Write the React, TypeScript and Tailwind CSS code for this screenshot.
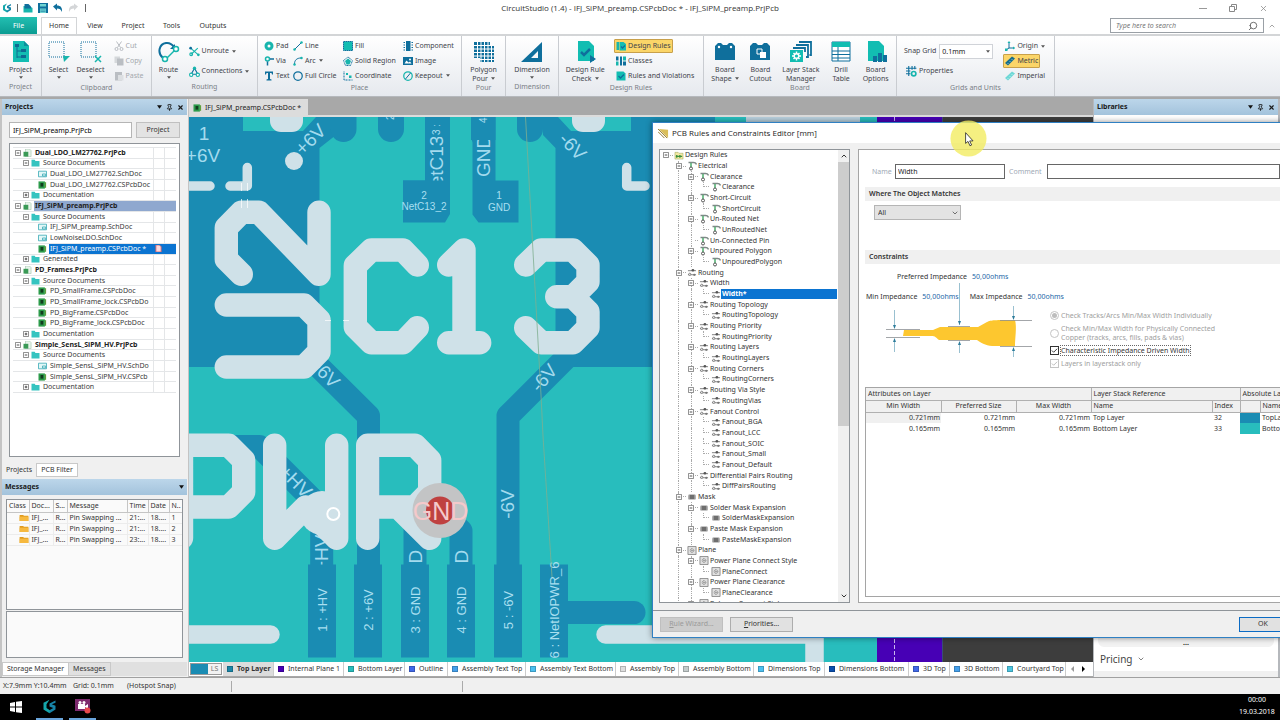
import type { ReactNode } from 'react';
import clsx from 'clsx';
import { ChevronDown, ChevronUp, Pin, Search, X } from 'lucide-react';

const TEAL = '#17b5ad';
const BLUE = '#0f6f9c';

/* ---------- Icons ---------- */

function Svg({ size = 'w-[10px] h-[10px]', box = '0 0 20 20', children }: { size?: string; box?: string; children: ReactNode }) {
  return (
    <svg viewBox={box} className={clsx('shrink-0', size)} fill="none" aria-hidden="true">
      {children}
    </svg>
  );
}

const big = 'w-[22px] h-[22px]';

const icons: Record<string, ReactNode> = {
  project: (
    <Svg size={big} box="0 0 22 22">
      <path d="M3 0h11l5 5v16H3z" fill="#12bdb2" />
      <path d="M14 0v5h5z" fill="#0a8f9c" />
      <path d="M7 5v12M7 10h4M7 16h4" stroke="#0d6c92" />
      <path d="M5 3h4v3H5zM11 8h5v3h-5zM11 14h5v3h-5z" fill="#0d6c92" />
    </Svg>
  ),
  select: (
    <Svg size={big} box="0 0 22 22">
      <rect x="1" y="1" width="15" height="15" stroke={BLUE} strokeDasharray="1 1" />
      <path d="M15 15h7l-6 6z" fill={TEAL} />
    </Svg>
  ),
  deselect: (
    <Svg size={big} box="0 0 22 22">
      <rect x="1" y="1" width="15" height="15" stroke={BLUE} strokeDasharray="1 1" />
      <path d="M15 15l6 6M21 15l-6 6" stroke={TEAL} strokeWidth="1.5" />
    </Svg>
  ),
  route: (
    <Svg size={big} box="0 0 22 22">
      <path d="M5 17C-1 12 1 3 8 2c4-.5 6 1 8 4" stroke={BLUE} strokeWidth="2" />
      <path d="M17 3v5h-5z" fill={BLUE} />
      <path d="M9 17l8-8" stroke={TEAL} strokeWidth="1.5" />
      <circle cx="7" cy="18" r="2.5" fill="#fff" stroke={TEAL} strokeWidth="1.5" />
      <circle cx="18" cy="8" r="2.5" fill="#fff" stroke={TEAL} strokeWidth="1.5" />
    </Svg>
  ),
  polygon: (
    <Svg size={big} box="0 0 22 22">
      <path d="M1 1h16v4h4v16H7v-4H1z" fill={BLUE} />
      <path d="M4.500 1v16M8 1v20M11.500 1v20M15 1v20M18.500 5v16M1 4.500h16M1 8h20M1 11.500h20M1 15h20M7 18.500h14" stroke="#fff" strokeWidth="1" />
    </Svg>
  ),
  dimension: (
    <Svg size={big} box="0 0 22 22">
      <path d="M0 21L21 1v20zM10 17h7v-7z" fill={BLUE} fillRule="evenodd" />
    </Svg>
  ),
  drc: (
    <Svg size={big} box="0 0 22 22">
      <path d="M4 0h11l5 5v15H4z" fill="#12bdb2" />
      <path d="M7 11l3 3 6-6" stroke={BLUE} strokeWidth="2.500" />
      <path d="M16 14l6 4-6 4z" fill={BLUE} />
    </Svg>
  ),
  shape: (
    <Svg size={big} box="0 0 22 22">
      <path d="M1 5l3-3h3l2 2h4l2-2h3l3 3v14H1z" fill={BLUE} />
      <circle cx="5" cy="6" r="1.200" fill="#fff" />
      <circle cx="17" cy="6" r="1.200" fill="#fff" />
    </Svg>
  ),
  cutout: (
    <Svg size={big} box="0 0 22 22">
      <path d="M1 5l3-3h3l2 2h4l2-2h3l3 3v14H1z" fill={BLUE} />
      <path d="M8 8h5v5H8z" stroke="#fff" />
      <path d="M11 11h6v6h-6z" fill="#fff" />
    </Svg>
  ),
  stack: (
    <Svg size={big} box="0 0 22 22">
      <path d="M9 1h12v13h-1.500M6 4h12v12h-2M3 7h12v4" stroke={BLUE} strokeWidth="1.800" />
      <path d="M0 9h13v12H0z" fill="#12bdb2" />
      <path d="M6.500 10.500v9M2 15h9M3.500 12l6 6M9.500 12l-6 6" stroke="#fff" strokeWidth="1.500" />
      <circle cx="6.500" cy="15" r="3" fill="#fff" />
      <circle cx="6.500" cy="15" r="1.600" fill="#12bdb2" />
    </Svg>
  ),
  drill: (
    <Svg size={big} box="0 0 22 22">
      <path d="M2 1h18v19H2z" fill="#fff" stroke={BLUE} />
      <path d="M2 1h18v5H2z" fill="#12bdb2" />
      <path d="M2 10h18M2 13.500h18M2 17h18M8 6v14" stroke={BLUE} />
    </Svg>
  ),
  options: (
    <Svg size={big} box="0 0 22 22">
      <path d="M3 0h11l5 5v15H3z" fill="#12bdb2" />
      <path d="M8 15h4v6H8zM13 12h4v9h-4zM18 14h4v7h-4z" fill={BLUE} />
    </Svg>
  ),
  cut: (
    <Svg>
      <path d="M5 1l8 12M15 1L7 13" stroke="#b9bdc2" strokeWidth="2" />
      <circle cx="5" cy="16" r="3" stroke="#b9bdc2" strokeWidth="2" />
      <circle cx="15" cy="16" r="3" stroke="#b9bdc2" strokeWidth="2" />
    </Svg>
  ),
  copy: (
    <Svg>
      <path d="M1 1h11v13H1z" fill="#d5d8db" />
      <path d="M6 5h13v14H6z" fill="#babec3" />
    </Svg>
  ),
  paste: (
    <Svg>
      <path d="M2 2h14v17H2z" fill="#babec3" />
      <path d="M8 8h11v11H8z" fill="#dcdfe2" />
    </Svg>
  ),
  unroute: (
    <Svg size="w-[11px] h-[11px]">
      <path d="M3 4l14 12M16 4L4 15" stroke={TEAL} strokeWidth="2" />
      <circle cx="3" cy="4" r="2.500" fill={BLUE} />
      <circle cx="4" cy="15" r="2.500" stroke={TEAL} strokeWidth="2" />
      <circle cx="17" cy="16" r="2.500" fill={TEAL} />
    </Svg>
  ),
  connections: (
    <Svg size="w-[11px] h-[11px]">
      <path d="M4 15L10 4l6 11z" stroke={BLUE} strokeWidth="2" />
      <circle cx="4" cy="16" r="3" fill="#fff" stroke={TEAL} strokeWidth="2" />
      <circle cx="16" cy="16" r="3" fill="#fff" stroke={TEAL} strokeWidth="2" />
      <circle cx="10" cy="4" r="3" fill={TEAL} />
    </Svg>
  ),
  pad: (
    <Svg>
      <circle cx="10" cy="10" r="6" stroke={TEAL} strokeWidth="6" />
    </Svg>
  ),
  via: (
    <Svg>
      <circle cx="7" cy="6" r="4" stroke={TEAL} strokeWidth="3" />
      <path d="M7 11v8M12 6h8" stroke={BLUE} strokeWidth="3" />
    </Svg>
  ),
  text: (
    <Svg>
      <path d="M2 1h16v6h-2l-1-3h-3v12l3 1v2H5v-2l3-1V4H5L4 7H2z" fill={BLUE} />
    </Svg>
  ),
  line: (
    <Svg>
      <path d="M4 16L16 4" stroke={BLUE} strokeWidth="2" />
      <circle cx="3" cy="17" r="2.500" fill={TEAL} />
      <circle cx="17" cy="3" r="2.500" fill={TEAL} />
    </Svg>
  ),
  arc: (
    <Svg>
      <path d="M3 16C3 8 8 4 16 4" stroke={BLUE} strokeWidth="2" />
      <circle cx="3" cy="17" r="2.500" fill={TEAL} />
      <circle cx="17" cy="4" r="2.500" fill={TEAL} />
    </Svg>
  ),
  circle: (
    <Svg>
      <circle cx="10" cy="10" r="8.500" stroke={BLUE} strokeWidth="2.500" />
    </Svg>
  ),
  fill: (
    <Svg>
      <path d="M1 1h18v18H1z" fill="#12bdb2" stroke={BLUE} strokeWidth="2" strokeDasharray="3 1" />
    </Svg>
  ),
  solid: (
    <Svg>
      <path d="M10 2l9 7-4 10H5L1 9z" stroke={BLUE} strokeWidth="2" strokeDasharray="2 1" />
      <path d="M10 5l6 5-3 7H7l-3-7z" fill={TEAL} />
    </Svg>
  ),
  coordinate: (
    <Svg>
      <path d="M2 1v17h17" stroke={BLUE} strokeWidth="2" strokeDasharray="2 1" />
      <path d="M6 4h4v4H6zM12 9h5v5h-5z" fill={TEAL} />
    </Svg>
  ),
  component: (
    <Svg>
      <path d="M6 0h9v20H6z" fill={BLUE} />
      <path d="M1 3h3M1 8h3M1 13h3M1 18h3M17 3h3M17 8h3M17 13h3M17 18h3" stroke={BLUE} strokeWidth="2" />
    </Svg>
  ),
  image: (
    <Svg>
      <path d="M0 2h20v16H0z" fill={BLUE} />
      <path d="M3 15l4-6 4 4 3-2 3 4z" fill="#fff" />
      <circle cx="14" cy="7" r="2" fill="#fff" />
    </Svg>
  ),
  keepout: (
    <Svg>
      <circle cx="10" cy="10" r="8.500" stroke={TEAL} strokeWidth="2.500" />
      <path d="M5 16L15 4" stroke={BLUE} strokeWidth="2" />
    </Svg>
  ),
  rules: (
    <Svg>
      <path d="M1 2h5v16H1z" fill={TEAL} />
      <path d="M7 2h8l5 4v13H7z" fill="#12bdb2" />
      <path d="M10 11l3 3 5-5" stroke={BLUE} strokeWidth="2.500" />
    </Svg>
  ),
  classes: (
    <Svg>
      <path d="M0 1h5v8H0zM8 1h4v18H8z" fill={BLUE} />
      <path d="M0 11h5v8H0zM14 1h6v8h-6z" fill={TEAL} />
      <path d="M14 11h6v8h-6z" fill={BLUE} />
    </Svg>
  ),
  violations: (
    <Svg>
      <path d="M1 1h14l4 4v14H1z" fill="#12bdb2" />
      <path d="M5 10l4 4 7-7" stroke={BLUE} strokeWidth="2.500" />
    </Svg>
  ),
  properties: (
    <Svg size="w-[11px] h-[11px]">
      <path d="M5 0v18M11 0v7M0 4h19M0 9h8M0 14h8M16 0v6" stroke={BLUE} strokeWidth="2" />
      <circle cx="14" cy="14" r="4" stroke={TEAL} strokeWidth="3" />
    </Svg>
  ),
  origin: (
    <Svg>
      <path d="M8 2v12h11M8 14l-6 4" stroke={BLUE} strokeWidth="2" />
      <path d="M5 4l3-4 3 4zM16 11l4 3-4 3zM0 15h5v5H0z" fill={TEAL} />
    </Svg>
  ),
  metric: (
    <Svg>
      <path d="M0 14L14 1l6 4L6 19z" fill="#146e8e" />
      <path d="M5 14l2 2M9 10l2 2M13 6l2 2" stroke="#fff" />
    </Svg>
  ),
  imperial: (
    <Svg>
      <path d="M0 14L14 1l6 4L6 19z" fill="#6fd8d6" />
      <path d="M5 14l2 2M9 10l2 2M13 6l2 2" stroke="#fff" />
    </Svg>
  ),
};

function Caret({ className }: { className?: string }) {
  return (
    <svg viewBox="0 0 6 4" className={clsx('w-[4px] h-[3px] shrink-0', className)} aria-hidden="true">
      <path d="M0 0h6L3 4z" fill="#555" />
    </svg>
  );
}

function LogoMark({ className }: { className: string }) {
  return (
    <svg viewBox="0 0 20 20" className={className} fill="none" aria-hidden="true">
      <path d="M10 1L2 5v9l8 5 2-3-6-4V7z" fill="#15a7ab" />
      <path d="M18 2l-8 4v4l5 2-5 3v4l8-5v-5l-5-2 5-2z" fill="#1784a8" />
    </svg>
  );
}

/* ---------- Ribbon ---------- */

function BigButton({ icon, lines, caret }: { icon: string; lines: string[]; caret?: boolean }) {
  return (
    <button className="flex flex-col items-center leading-[9px] whitespace-nowrap">
      {icons[icon]}
      {lines.map((line, i) => (
        <span key={line} className={clsx('flex items-center gap-[3px]', i === 0 && 'mt-[2px]')}>
          {line}
          {caret && i === 1 && <Caret />}
        </span>
      ))}
      {caret && lines.length === 1 && <Caret className="mt-[2px]" />}
    </button>
  );
}

function SmallButton({ icon, label, caret, active, disabled }: { icon: string; label: string; caret?: boolean; active?: boolean; disabled?: boolean }) {
  return (
    <button
      disabled={disabled}
      className={clsx(
        'flex items-center gap-[2px] justify-self-start self-center h-[14px] border rounded-[1px] px-[1px] whitespace-nowrap',
        active ? 'bg-[#fbd568] border-[#c8a04a]' : 'border-transparent',
        disabled && 'text-[#a4a8ad]'
      )}
    >
      {icons[icon]}
      {label}
      {caret && <Caret className="ml-[1px]" />}
    </button>
  );
}

function Group({ label, width, children }: { label: string; width: string; children: ReactNode }) {
  return (
    <section aria-label={label} className={clsx('shrink-0 flex flex-col border-r border-[#c9ccd1]', width)}>
      <div className="flex-1 flex justify-around pt-[5px] px-[2px]">{children}</div>
      <div className="text-center text-[#7a7f87] leading-[10px] pb-[4px]">{label}</div>
    </section>
  );
}

const smallGrid = 'grid auto-rows-fr h-[44px] -mt-[2px]';

function Ribbon() {
  return (
    <div className="flex h-[61px] shrink-0 bg-linear-to-b from-white to-[#e6e9ee] border-b border-[#b5b8bc] text-[#3f444b] overflow-hidden">
      <Group label="Project" width="w-[42px]">
        <BigButton icon="project" lines={['Project']} caret />
      </Group>
      <Group label="Clipboard" width="w-[110px]">
        <BigButton icon="select" lines={['Select']} caret />
        <BigButton icon="deselect" lines={['Deselect']} caret />
        <div className={smallGrid}>
          <SmallButton icon="cut" label="Cut" disabled />
          <SmallButton icon="copy" label="Copy" disabled />
          <SmallButton icon="paste" label="Paste" disabled />
        </div>
      </Group>
      <Group label="Routing" width="w-[106px]">
        <BigButton icon="route" lines={['Route']} caret />
        <div className="grid auto-rows-fr h-[40px]">
          <SmallButton icon="unroute" label="Unroute" caret />
          <SmallButton icon="connections" label="Connections" caret />
        </div>
      </Group>
      <Group label="Place" width="w-[204px]">
        <div className={clsx(smallGrid, 'grid-cols-[29px_50px_60px_56px]')}>
          <SmallButton icon="pad" label="Pad" />
          <SmallButton icon="line" label="Line" />
          <SmallButton icon="fill" label="Fill" />
          <SmallButton icon="component" label="Component" />
          <SmallButton icon="via" label="Via" />
          <SmallButton icon="arc" label="Arc" caret />
          <SmallButton icon="solid" label="Solid Region" />
          <SmallButton icon="image" label="Image" />
          <SmallButton icon="text" label="Text" />
          <SmallButton icon="circle" label="Full Circle" />
          <SmallButton icon="coordinate" label="Coordinate" />
          <SmallButton icon="keepout" label="Keepout" caret />
        </div>
      </Group>
      <Group label="Pour" width="w-[44px]">
        <BigButton icon="polygon" lines={['Polygon', 'Pour']} caret />
      </Group>
      <Group label="Dimension" width="w-[53px]">
        <BigButton icon="dimension" lines={['Dimension']} caret />
      </Group>
      <Group label="Design Rules" width="w-[145px]">
        <BigButton icon="drc" lines={['Design Rule', 'Check']} caret />
        <div className={smallGrid}>
          <SmallButton icon="rules" label="Design Rules" active />
          <SmallButton icon="classes" label="Classes" />
          <SmallButton icon="violations" label="Rules and Violations" />
        </div>
      </Group>
      <Group label="Board" width="w-[193px]">
        <BigButton icon="shape" lines={['Board', 'Shape']} caret />
        <BigButton icon="cutout" lines={['Board', 'Cutout']} />
        <BigButton icon="stack" lines={['Layer Stack', 'Manager']} />
        <BigButton icon="drill" lines={['Drill', 'Table']} />
        <BigButton icon="options" lines={['Board', 'Options']} />
      </Group>
      <Group label="Grids and Units" width="w-[158px]">
        <div className="grid auto-rows-fr h-[40px]">
          <label className="flex items-center gap-[3px] whitespace-nowrap">
            Snap Grid
            <span className="relative flex items-center">
              <input defaultValue="0.1mm" className="w-[54px] h-[15px] border border-[#d0d3d8] bg-white text-[#222] px-[2px]" />
              <Caret className="absolute right-[3px]" />
            </span>
          </label>
          <SmallButton icon="properties" label="Properties" />
        </div>
        <div className={smallGrid}>
          <SmallButton icon="origin" label="Origin" caret />
          <SmallButton icon="metric" label="Metric" active />
          <SmallButton icon="imperial" label="Imperial" />
        </div>
      </Group>
    </div>
  );
}

function TitleBar() {
  return (
    <header className="shrink-0 bg-white">
      <div className="grid grid-cols-[1fr_auto_1fr] items-center h-[16px] text-[#333]">
        <div className="flex items-center gap-[5px] pl-[2px]">
          <LogoMark className="w-[10px] h-[10px]" />
          <span className="w-px h-[8px] bg-[#666]" />
          <button aria-label="Open">
            <Svg size="w-[10px] h-[10px]"><path d="M1 6h12l6 4v9H1z" fill={TEAL} /><path d="M3 2h8l5 5v4H3z" fill={BLUE} /></Svg>
          </button>
          <button aria-label="Save">
            <Svg size="w-[10px] h-[10px]"><path d="M0 0h20v20H0z" fill={BLUE} /><path d="M4 2h12v5H4zM4 11h12v9H4z" fill="#6fd3d1" /><path d="M5 14h10M5 17h10" stroke={BLUE} /></Svg>
          </button>
          <button aria-label="Undo">
            <Svg size="w-[10px] h-[10px]"><path d="M0 7l8-6v4c7 0 11 4 10 13-2-5-5-7-10-7v4z" fill={BLUE} /></Svg>
          </button>
          <button aria-label="Redo">
            <Svg size="w-[10px] h-[10px]"><path d="M20 7l-8-6v4C5 5 1 9 2 18c2-5 5-7 10-7v4z" fill="#d4d6d8" /></Svg>
          </button>
          <span className="w-px h-[8px] bg-[#666] ml-[2px]" />
        </div>
        <h1 className="text-[8px] font-['Open_Sans',sans-serif]">CircuitStudio (1.4) - IFJ_SiPM_preamp.CSPcbDoc * - IFJ_SiPM_preamp.PrjPcb</h1>
        <div className="flex justify-end items-center gap-[22px] pr-[12px] text-[#888]">
          <button aria-label="Minimize" className="w-[8px] border-t border-[#999]" />
          <button aria-label="Restore">
            <svg viewBox="0 0 8 8" className="w-[8px] h-[8px]" fill="none" stroke="#888"><path d="M.500 2.500h5v5h-5zM2.500 2.500v-2h5v5h-2" /></svg>
          </button>
          <button aria-label="Close"><X size={9} strokeWidth={2} /></button>
        </div>
      </div>
      <div className="flex items-end h-[20px] border-b-2 border-[#d3d5d7] text-[#333]">
        <nav className="flex h-[17px]">
          <button className="w-[37px] bg-linear-to-b from-[#22bfb2] to-[#0a9c92] text-white">File</button>
          <button className="w-[36px] ml-[4px] bg-white border border-b-0 border-[#d3d5d7]">Home</button>
          <button className="w-[36px]">View</button>
          <button className="w-[40px]">Project</button>
          <button className="w-[37px]">Tools</button>
          <button className="w-[46px]">Outputs</button>
        </nav>
        <div className="ml-auto flex items-center gap-[4px] pr-[4px] h-[17px]">
          <label className="flex items-center border border-[#9aa0a6] h-[15px] w-[154px] px-[5px]">
            <input aria-label="Search" placeholder="Type here to search" className="flex-1 min-w-0 italic outline-none placeholder:text-[#777]" />
            <Search size={10} className="text-[#555] -scale-x-100" />
          </label>
          <ChevronUp size={8} className="text-[#777]" />
        </div>
      </div>
    </header>
  );
}

/* ---------- Left panels ---------- */

type Node = { level: number; label: string; kind: string; open?: boolean };

const projectTree: Node[] = [
  { level: 0, label: 'Dual_LDO_LM27762.PrjPcb', kind: 'prj', open: true },
  { level: 1, label: 'Source Documents', kind: 'dir', open: true },
  { level: 2, label: 'Dual_LDO_LM27762.SchDoc', kind: 'sch' },
  { level: 2, label: 'Dual_LDO_LM27762.CSPcbDoc', kind: 'pcb' },
  { level: 1, label: 'Documentation', kind: 'dir', open: false },
  { level: 0, label: 'IFJ_SiPM_preamp.PrjPcb', kind: 'prj', open: true },
  { level: 1, label: 'Source Documents', kind: 'dir', open: true },
  { level: 2, label: 'IFJ_SiPM_preamp.SchDoc', kind: 'sch' },
  { level: 2, label: 'LowNoiseLDO.SchDoc', kind: 'sch' },
  { level: 2, label: 'IFJ_SiPM_preamp.CSPcbDoc *', kind: 'pcb' },
  { level: 1, label: 'Generated', kind: 'dir', open: false },
  { level: 0, label: 'PD_Frames.PrjPcb', kind: 'prj', open: true },
  { level: 1, label: 'Source Documents', kind: 'dir', open: true },
  { level: 2, label: 'PD_SmallFrame.CSPcbDoc', kind: 'pcb' },
  { level: 2, label: 'PD_SmallFrame_lock.CSPcbDo', kind: 'pcb' },
  { level: 2, label: 'PD_BigFrame.CSPcbDoc', kind: 'pcb' },
  { level: 2, label: 'PD_BigFrame_lock.CSPcbDoc', kind: 'pcb' },
  { level: 1, label: 'Documentation', kind: 'dir', open: false },
  { level: 0, label: 'Simple_SensL_SiPM_HV.PrjPcb', kind: 'prj', open: true },
  { level: 1, label: 'Source Documents', kind: 'dir', open: true },
  { level: 2, label: 'Simple_SensL_SiPM_HV.SchDo', kind: 'sch' },
  { level: 2, label: 'Simple_SensL_SiPM_HV.CSPcb', kind: 'pcb' },
  { level: 1, label: 'Documentation', kind: 'dir', open: false },
];

const projectIndent = ['pl-[2px]', 'pl-[10px]', 'pl-[17px]'];

function Expander({ open }: { open?: boolean }) {
  if (open === undefined) return <span className="w-[6px] shrink-0" />;
  return (
    <svg viewBox="0 0 7 7" className="w-[6px] h-[6px] shrink-0 bg-white" fill="none" stroke="#777">
      <path d="M.500.500h6v6h-6z" />
      <path d={open ? 'M2 3.500h3' : 'M2 3.500h3M3.500 2v3'} stroke="#333" />
    </svg>
  );
}

function FileIcon({ kind }: { kind: string }) {
  if (kind === 'dir') return <Svg size="w-[9px] h-[8px]"><path d="M0 2h8l2 3h10v14H0z" fill="#35c4c0" /></Svg>;
  if (kind === 'sch')
    return <Svg size="w-[9px] h-[8px]"><path d="M0 3h20v14H0z" fill="#e2f7f7" stroke="#3aa9b5" strokeWidth="2" /><path d="M10 10h8v5h-8z" stroke="#3aa9b5" strokeWidth="2" /></Svg>;
  if (kind === 'pcb')
    return <Svg size="w-[9px] h-[8px]"><path d="M0 1h16v18H0z" fill="#2c9b4b" /><path d="M5 5h7v9H5z" fill="#123c1e" /><path d="M16 3h3v14h-3z" fill="#5f9f3a" /></Svg>;
  return <Svg size="w-[9px] h-[8px]"><path d="M5 0h10l4 4v15H5z" fill="#e8f4ea" stroke="#7aa98a" /><path d="M0 7h12v12H0z" fill="#3a9a56" /></Svg>;
}

function ProjectTree() {
  return (
    <ul className="grid auto-rows-fr h-[246px] m-[3px] border-t border-[#e4e6e8] text-[#3a3a3a]">
      {projectTree.map((node, i) => {
        const active = i === 9;
        const current = i === 5;
        return (
          <li key={i} className={clsx('flex items-stretch min-h-0 border-b border-[#e4e6e8] leading-none', projectIndent[node.level])}>
            <span className="flex items-center gap-[2px] shrink-0 mr-[2px]">
              <Expander open={node.open} />
              <FileIcon kind={node.kind} />
            </span>
            <span className={clsx('flex flex-1 min-w-0 items-center', active && 'bg-[#0b74d1] text-white', current && 'bg-[#8fa8cf]')}>
              <span className={clsx('flex-1 min-w-0 whitespace-nowrap pl-[1px] leading-[10px]', node.level === 0 && 'font-bold text-[#222]')}>{node.label}</span>
              {active && (
                <svg viewBox="0 0 8 8" className="w-[7px] h-[7px] mr-[14px] shrink-0"><path d="M1 0h4l2 2v6H1z" fill="#fbd9dc" stroke="#d2636c" /></svg>
              )}
              {!active && !current && <span className="w-[23px] self-stretch border-l border-[#e4e6e8] grid grid-cols-2"><i className="border-r border-[#e4e6e8]" /></span>}
            </span>
          </li>
        );
      })}
    </ul>
  );
}

function PanelHeader({ title, full }: { title: string; full?: boolean }) {
  return (
    <div className="flex items-center shrink-0 h-[16px] pl-[3px] pr-[3px] bg-linear-to-b from-[#bcd6ea] to-[#a3c3dc] text-[#1a1a1a]">
      <h2 className="font-bold">{title}</h2>
      <div className="ml-auto flex items-center gap-[4px]">
        <svg viewBox="0 0 6 4" className="w-[5px] h-[4px]"><path d="M0 0h6L3 4z" fill="#111" /></svg>
        {full && <Pin size={7} strokeWidth={3} />}
        {full && <X size={7} strokeWidth={4} />}
      </div>
    </div>
  );
}

const messages = [
  ['IFJ_...', 'R...', 'Pin Swapping ...', '21:...', '18....', '1'],
  ['IFJ_...', 'R...', 'Pin Swapping ...', '21:...', '18....', '2'],
  ['IFJ_...', 'R...', 'Pin Swapping ...', '23:...', '18....', '3'],
];

function LeftPanels() {
  return (
    <aside className="w-[189px] shrink-0 flex flex-col bg-[#f0f0f0] border-l-2 border-[#c4c4c4] border-r pr-[1px]">
      <PanelHeader title="Projects" full />
      <div className="flex gap-[4px] px-[7px] pt-[7px] pb-[5px]">
        <input aria-label="Project name" defaultValue="IFJ_SiPM_preamp.PrjPcb" className="w-[123px] h-[16px] px-[3px] bg-white border border-[#b5b5b5]" />
        <button className="flex-1 bg-[#e3e3e3] border border-[#c0c0c0] text-[#333]">Project</button>
      </div>
      <div className="flex-1 min-h-0 overflow-hidden mx-[7px] bg-white border border-[#8f9499]">
        <ProjectTree />
      </div>
      <div className="flex mt-[6px] h-[14px] text-[#333]">
        <button className="px-[4px]">Projects</button>
        <button className="px-[4px] bg-white border border-[#c9c9c9]">PCB Filter</button>
      </div>
      <div className="mt-[2px]">
        <PanelHeader title="Messages" />
      </div>
      <div className="h-[111px] mx-[4px] mt-[4px] bg-[#fafafa] border border-[#8f9499] overflow-hidden">
        <table className="w-full table-fixed border-collapse text-left text-[#333]">
          <thead>
            <tr className="h-[12px] border-b border-[#c5c5c5] leading-[10px]">
              <th className="w-[22px] font-normal pl-[2px]">Class</th>
              <th className="w-[24px] font-normal pl-[2px] border-l border-[#c5c5c5]">Doc...</th>
              <th className="w-[14px] font-normal pl-[2px] border-l border-[#c5c5c5]">S...</th>
              <th className="w-[60px] font-normal pl-[2px] border-l border-[#c5c5c5]">Message</th>
              <th className="w-[21px] font-normal pl-[2px] border-l border-[#c5c5c5]">Time</th>
              <th className="w-[21px] font-normal pl-[2px] border-l border-[#c5c5c5]">Date</th>
              <th className="font-normal pl-[2px] border-l border-[#c5c5c5]">N..</th>
            </tr>
          </thead>
          <tbody>
            {messages.map((row, i) => (
              <tr key={i} className="h-[11px] leading-[10px] border-b border-[#ececec] whitespace-nowrap">
                <td>
                  <svg viewBox="0 0 10 8" className="w-[10px] h-[7px] ml-auto"><path d="M0 1h4l1 1h5v6H0z" fill="#e09a1c" /><path d="M0 3h10v5H0z" fill="#f6b93f" /></svg>
                </td>
                {row.map((cell, j) => (
                  <td key={j} className="pl-[2px] border-l border-[#ececec]">{cell}</td>
                ))}
              </tr>
            ))}
          </tbody>
        </table>
      </div>
      <div className="h-[47px] mx-[4px] mt-px bg-[#fafafa] border border-[#8f9499]" />
      <div className="flex mt-[4px] mb-px h-[14px] bg-[#e0e0e0] text-[#333]">
        <button className="px-[4px] bg-white border border-[#c9c9c9]">Storage Manager</button>
        <button className="px-[4px] border border-l-0 border-[#c9c9c9]">Messages</button>
      </div>
    </aside>
  );
}

/* ---------- Board canvas ---------- */

const pinLabels = [
  { x: 322, label: '1 : +HV' },
  { x: 368, label: '2 : +6V' },
  { x: 415, label: '3 : GND' },
  { x: 461, label: '4 : GND' },
  { x: 508, label: '5 : -6V' },
  { x: 554, label: '6 : NetIOPWR_6' },
];

function Board() {
  const copper = '#1a8cb3';
  const mask = '#28bdbd';
  const silk = '#cfe1e8';
  return (
    <svg viewBox="189 117 904 545" preserveAspectRatio="xMinYMin slice" className="block w-full h-full font-['Liberation_Sans',sans-serif]">
      <rect x="189" y="117" width="904" height="545" fill={mask} />
      {/* copper pours */}
      <path d="M189 117H336V135L319.500 148V367H189z" fill={copper} />
      <path d="M543 117H746V367H571L555.500 380V148L543 135z" fill={copper} />
      <path d="M243 117H316L303 131H243zM558 117L571 131H631V117z" fill={mask} />
      <g stroke={copper} strokeWidth="23" fill="none" strokeLinejoin="round">
        <path d="M300 348L368.500 416V570" />
        <path d="M575 349L508 416V570" />
        <path d="M225 446.500H259.500L321.700 508.700V570" />
        <path d="M415 515V570M440 510L461 531V570" />
        <path d="M560 612.500H634" strokeLinecap="round" />
        <path d="M343.500 110V129M391 110V129M530 110V129" strokeWidth="26" strokeLinecap="round" />
      </g>
      <path d="M425 117h25v97l-5 8.500h-42v-42h22zM471 117h24.500v63.500h23v42h-40l-6-8v-72l-1.500-5z" fill={copper} />
      {/* net names */}
      <g fill="#a3dbee" fontSize="19" textAnchor="middle">
        <text x="204" y="140">1</text>
        <text x="203" y="162">+6V</text>
        <text transform="translate(315 144) rotate(-45)">+6V</text>
        <text transform="translate(568 151) rotate(46)">-6V</text>
        <text transform="translate(320 377) rotate(46)">+6V</text>
        <text transform="translate(549 382) rotate(-50)">-6V</text>
        <text transform="translate(291 486) rotate(45)">+HV</text>
        <text transform="translate(514 504) rotate(-90)">-6V</text>
      </g>
      <g fill="#a3dbee" fontSize="19">
        <text transform="translate(328 572) rotate(-90)">+HV</text>
        <text transform="translate(422 592) rotate(-90)">GND</text>
        <text transform="translate(468 592) rotate(-90)">GND</text>
        <text transform="translate(443 200) rotate(-90)">NetC13</text>
        <text transform="translate(490 177) rotate(-90)">GND</text>
      </g>
      <path d="M425 117h25v20h-25zM471 117h24.500v23H471zM403 180.500h46v20h-46z" fill={copper} />
      {pinLabels.map((pin) => (
        <rect key={pin.label} x={pin.x - 14} y="564.500" width="28" height="93" fill={copper} />
      ))}
      <g fill="#a9dff0" fontSize="13">
        {pinLabels.map((pin) => (
          <text key={pin.label} transform={`translate(${pin.x + 5} 610) rotate(-90)`} textAnchor="middle">{pin.label}</text>
        ))}
        <text fontSize="10" transform="translate(440 135) rotate(-90)">3 :</text>
        <text fontSize="10" transform="translate(487 123) rotate(-90)">4</text>
        <text fontSize="10" transform="translate(394 120) rotate(-90)">2</text>
      </g>
      <g fill="#a9dff0" fontSize="10" textAnchor="middle">
        <text x="424" y="199">2</text>
        <text x="424" y="210">NetC13_2</text>
        <text x="499" y="199">1</text>
        <text x="499" y="211">GND</text>
      </g>
      {/* silkscreen */}
      <g stroke={silk} strokeWidth="23.400" fill="none" strokeLinecap="round" strokeLinejoin="round">
        <path d="M241.300 274.300L226.300 259.300V227.700L241.300 212.300H259L319 274.300V212.300" />
        <path d="M226.300 305H304L319 320V351.700L304 367H226.300" />
        <path d="M417.300 265L403 250H371.300L355.300 265.700V326.700L371.300 342.700H403L417.300 327.700" />
        <path d="M448.700 265L464 250V342.700M448.700 342.700H479.700" />
        <path d="M525.700 265L541.300 250H573L588 265V281.700L573 296.700H556.700M573 296.700L588 311.700V327.700L573 342.700H541.300L525.700 327.700" />
        <path d="M181.500 538V445.300H228.700L243.700 460.300V492L228.700 507H181" />
        <path d="M274.700 445.300V538.300L305.700 507L336.700 538.300V445.300" />
        <path d="M367.700 538.300V445.300H415L429.700 460.300V492L415 507H367.700M398 507L429.700 538.300" />
        <path d="M281 110V121H292V110zM583 110V121H594V110z" strokeWidth="22" />
        <path d="M185 186H210M230 186H247.300V167.500M626.700 167.500V186H645" strokeWidth="9.500" />
        <path d="M185 634.500H270.500M605.500 634.500H814.500V670" strokeWidth="18.500" />
      </g>
      <circle cx="294" cy="161" r="9" fill={silk} />
      <circle cx="322" cy="513" r="22" fill={silk} />
      <circle cx="333.300" cy="514" r="6" stroke="#fff" strokeWidth="2" fill="none" />
      <path d="M241.500 183v8M247.500 183v8M241.500 199v9M247.500 199v9M325 320.500h6M343 320.500h6" stroke="#fff" strokeWidth=".7" />
      <circle cx="440" cy="510.500" r="27.500" fill="#c3c4c5" />
      <circle cx="440" cy="510.500" r="14" fill="#bf4140" />
      <text x="440.500" y="519.500" fontSize="25" textAnchor="middle" fill="#f4c9cb">GND</text>
      <path d="M525.500 117L541 395L543 436L552 577" stroke="#7fae90" strokeWidth=".8" fill="none" />
      {/* area right of the board edge */}
      <path d="M715 117h31v8h-31z" fill={mask} />
      <path d="M746 117h114v8H746z" fill="#b7cfdc" />
      <path d="M877 117h65.500v545H877z" fill="#4700b5" />
      <path d="M942.500 117H1093v545H942.500z" fill="#3d3d3d" />
      <path d="M894.500 117v545" stroke="#c9b5ee" strokeDasharray="4 2" />
    </svg>
  );
}

const layers = [
  { name: 'Top Layer', swatch: 'bg-[#1a86a8]', width: 'w-[51px]' },
  { name: 'Internal Plane 1', swatch: 'bg-[#4700b5]', width: 'w-[70px]' },
  { name: 'Bottom Layer', swatch: 'bg-[#28bdbd]', width: 'w-[61px]' },
  { name: 'Outline', swatch: 'bg-[#4169e8]', width: 'w-[43px]' },
  { name: 'Assembly Text Top', swatch: 'bg-[#45a0ec]', width: 'w-[78px]' },
  { name: 'Assembly Text Bottom', swatch: 'bg-[#4cc0f0]', width: 'w-[90px]' },
  { name: 'Assembly Top', swatch: 'bg-[#dedede]', width: 'w-[63px]' },
  { name: 'Assembly Bottom', swatch: 'bg-[#c4cccc]', width: 'w-[75px]' },
  { name: 'Dimensions Top', swatch: 'bg-[#4cc0f0]', width: 'w-[71px]' },
  { name: 'Dimensions Bottom', swatch: 'bg-[#0b4fae]', width: 'w-[84px]' },
  { name: '3D Top', swatch: 'bg-[#4169e8]', width: 'w-[41px]' },
  { name: '3D Bottom', swatch: 'bg-[#45a0ec]', width: 'w-[53px]' },
  { name: 'Courtyard Top', swatch: 'bg-[#4cc5e0]', width: 'w-[63px]' },
];

function DocumentArea() {
  return (
    <main className="flex-1 min-w-0 flex flex-col">
      <div className="shrink-0 h-[18px] flex border-b-2 border-[#dcdcdc]">
        <button className="flex items-center gap-[3px] h-[17px] w-[119px] pl-[4px] bg-[#dcdcdc] text-[#222] whitespace-nowrap">
          <FileIcon kind="pcb" />
          IFJ_SiPM_preamp.CSPcbDoc *
        </button>
      </div>
      <div className="flex-1 min-h-0 overflow-hidden">
        <Board />
      </div>
      <div className="shrink-0 flex h-[14px] mb-px bg-white text-[#333] overflow-hidden">
        <button className="shrink-0 flex w-[32px] m-[1px] border border-[#999] bg-[#f2f2f2] text-[#777]">
          <span className="w-[17px] h-full bg-[#1a8cb3]" />
          <span className="flex-1 leading-[10px]">LS</span>
        </button>
        {layers.map((layer, i) => (
          <button key={layer.name} className={clsx('shrink-0 flex items-center gap-[4px] pl-[4px] border-r border-[#ccc] whitespace-nowrap', layer.width, i === 0 && 'bg-[#dcdcdc] font-bold')}>
            <span className={clsx('w-[6px] h-[6px] shrink-0 border border-black/20', layer.swatch)} />
            {layer.name}
          </button>
        ))}
        <div className="flex items-center gap-[8px] px-[5px]">
          <button aria-label="Scroll layers left" className="w-0 h-0 border-y-[3px] border-y-transparent border-r-[3px] border-r-[#999]" />
          <button aria-label="Scroll layers right" className="w-0 h-0 border-y-[3px] border-y-transparent border-l-[3px] border-l-black" />
        </div>
      </div>
    </main>
  );
}

function LibrariesPanel() {
  return (
    <aside className="w-[187px] shrink-0 flex flex-col bg-white border-l border-r-2 border-[#b5b8bc]">
      <PanelHeader title="Libraries" full />
      <div className="flex-1" />
      <div className="h-[9px] mx-[4px] bg-[#f2f2f2] rounded-b-md text-center leading-[9px] font-bold">...</div>
      <button className="flex items-center gap-[5px] h-[24px] px-[6px] text-[10px] text-[#444]">
        Pricing
        <ChevronDown size={8} />
      </button>
      <div className="h-[6px] bg-[#f0f0f0]" />
    </aside>
  );
}

/* ---------- Rules dialog ---------- */

const ruleTree: Node[] = [
  { level: 0, label: 'Design Rules', kind: 'root', open: true },
  { level: 1, label: 'Electrical', kind: 'elec', open: true },
  { level: 2, label: 'Clearance', kind: 'elec', open: true },
  { level: 3, label: 'Clearance', kind: 'elec' },
  { level: 2, label: 'Short-Circuit', kind: 'elec', open: true },
  { level: 3, label: 'ShortCircuit', kind: 'elec' },
  { level: 2, label: 'Un-Routed Net', kind: 'elec', open: true },
  { level: 3, label: 'UnRoutedNet', kind: 'elec' },
  { level: 2, label: 'Un-Connected Pin', kind: 'elec' },
  { level: 2, label: 'Unpoured Polygon', kind: 'elec', open: true },
  { level: 3, label: 'UnpouredPolygon', kind: 'elec' },
  { level: 1, label: 'Routing', kind: 'route', open: true },
  { level: 2, label: 'Width', kind: 'route', open: true },
  { level: 3, label: 'Width*', kind: 'route' },
  { level: 2, label: 'Routing Topology', kind: 'route', open: true },
  { level: 3, label: 'RoutingTopology', kind: 'route' },
  { level: 2, label: 'Routing Priority', kind: 'route', open: true },
  { level: 3, label: 'RoutingPriority', kind: 'route' },
  { level: 2, label: 'Routing Layers', kind: 'route', open: true },
  { level: 3, label: 'RoutingLayers', kind: 'route' },
  { level: 2, label: 'Routing Corners', kind: 'route', open: true },
  { level: 3, label: 'RoutingCorners', kind: 'route' },
  { level: 2, label: 'Routing Via Style', kind: 'route', open: true },
  { level: 3, label: 'RoutingVias', kind: 'route' },
  { level: 2, label: 'Fanout Control', kind: 'route', open: true },
  { level: 3, label: 'Fanout_BGA', kind: 'route' },
  { level: 3, label: 'Fanout_LCC', kind: 'route' },
  { level: 3, label: 'Fanout_SOIC', kind: 'route' },
  { level: 3, label: 'Fanout_Small', kind: 'route' },
  { level: 3, label: 'Fanout_Default', kind: 'route' },
  { level: 2, label: 'Differential Pairs Routing', kind: 'route', open: true },
  { level: 3, label: 'DiffPairsRouting', kind: 'route' },
  { level: 1, label: 'Mask', kind: 'mask', open: true },
  { level: 2, label: 'Solder Mask Expansion', kind: 'mask', open: true },
  { level: 3, label: 'SolderMaskExpansion', kind: 'mask' },
  { level: 2, label: 'Paste Mask Expansion', kind: 'mask', open: true },
  { level: 3, label: 'PasteMaskExpansion', kind: 'mask' },
  { level: 1, label: 'Plane', kind: 'plane', open: true },
  { level: 2, label: 'Power Plane Connect Style', kind: 'plane', open: true },
  { level: 3, label: 'PlaneConnect', kind: 'plane' },
  { level: 2, label: 'Power Plane Clearance', kind: 'plane', open: true },
  { level: 3, label: 'PlaneClearance', kind: 'plane' },
  { level: 2, label: 'Polygon Connect Style', kind: 'plane', open: true },
];

const ruleIndent = ['pl-[3px]', 'pl-[16px]', 'pl-[28px]', 'pl-[40px]'];

function RuleIcon({ kind }: { kind: string }) {
  if (kind === 'root')
    return <Svg size="w-[10px] h-[9px]"><path d="M1 3h7l2 2h9v13H1z" fill="#f3e9a4" stroke="#8d9a4b" /><path d="M3 12h14M5 9v6M12 9v6" stroke="#3c8f3c" strokeWidth="3" /></Svg>;
  if (kind === 'elec')
    return <Svg size="w-[10px] h-[10px]"><path d="M3 3h10c3 0 5 1 6 4" stroke="#7d8a86" strokeWidth="3" /><path d="M8 4v8" stroke="#4cae6c" strokeWidth="3" /><circle cx="8" cy="15" r="3" stroke="#555" strokeWidth="2" /></Svg>;
  if (kind === 'route')
    return <Svg size="w-[10px] h-[9px]"><path d="M1 6h18M1 15h18" stroke="#777" strokeWidth="2" /><circle cx="12" cy="5" r="3" fill="#555" /><circle cx="5" cy="14" r="2.500" fill="#fff" stroke="#555" strokeWidth="1.500" /><circle cx="15" cy="15" r="2.500" fill="#777" /></Svg>;
  if (kind === 'mask')
    return <Svg size="w-[10px] h-[8px]"><rect x="0" y="3" width="20" height="14" rx="4" fill="#b3b3b3" /><rect x="4" y="5" width="12" height="10" fill="#6e6e6e" /></Svg>;
  return <Svg size="w-[10px] h-[9px]"><path d="M1 1h18v18H1z" fill="#e0e0e0" stroke="#888" strokeWidth="2" /><circle cx="10" cy="10" r="4" stroke="#777" strokeWidth="2" strokeDasharray="2 1" /><circle cx="10" cy="10" r="1.500" fill="#777" /></Svg>;
}

function RuleTree() {
  return (
    <div className="w-[191px] shrink-0 flex bg-white border border-[#8f9499] overflow-hidden">
      <ul className="flex-1 grid auto-rows-fr h-[459px] text-[#333] pr-[1px]">
        {ruleTree.map((node, i) => (
          <li key={i} className={clsx('relative flex items-center min-h-0 leading-none', ruleIndent[node.level])}>
            {node.level > 0 && <i className="absolute inset-y-0 left-[18px] border-l border-dotted border-[#aaa]" />}
            {node.level > 1 && <i className="absolute inset-y-0 left-[31px] border-l border-dotted border-[#aaa]" />}
            {node.level > 2 && <i className="absolute top-0 h-1/2 left-[43px] w-[6px] border-l border-b border-dotted border-[#aaa]" />}
            <span className="relative flex items-center">
              <Expander open={node.open} />
              <i className={clsx('w-[3px] mx-[1px] border-t border-dotted', node.level < 3 ? 'border-[#aaa]' : 'border-transparent')} />
              <RuleIcon kind={node.kind} />
            </span>
            <span className={clsx('flex-1 whitespace-nowrap pl-[1px] leading-[10px]', i === 13 && 'bg-[#0b74d1] text-white font-bold')}>{node.label}</span>
          </li>
        ))}
      </ul>
      <div className="w-[11px] shrink-0 flex flex-col items-center bg-[#f0f0f0]">
        <button aria-label="Scroll up" className="h-[12px]"><ChevronUp size={8} strokeWidth={3} /></button>
        <div className="w-full h-[264px] bg-[#cdcdcd]" />
        <button aria-label="Scroll down" className="mt-auto h-[12px]"><ChevronDown size={8} strokeWidth={3} /></button>
      </div>
    </div>
  );
}

function TraceDrawing() {
  return (
    <svg viewBox="885 304 150 52" className="w-[150px] h-[52px] shrink-0 overflow-visible" fill="none" aria-hidden="true">
      <path d="M904 329h29l7-3h38l9-5c4-2 8-2 28-2 2 7 0 18 0 26h-20c-8 0-12-2-18-6h-38c-4-3-3-4-8-4h-28z" fill="#fdc72f" />
      <path d="M886 328.500h34M886 336.500h34M948 325.500h22M948 339.500h22M1000 319.500h32M1000 345.500h32" stroke="#8c8f93" strokeWidth=".8" />
      <path d="M894.500 309v18M894.500 338v13M959.500 282v42M959.500 341v11M1013.500 305v13M1013.500 347v9" stroke="#7fb0c4" strokeWidth=".8" />
      <path d="M893 324h3l-1.500 4zM893 341h3l-1.500-4zM958 320h3l-1.500 4zM958 344h3l-1.500-4zM1012 315h3l-1.500 4zM1012 350h3l-1.500-4z" fill="#2d7c9b" />
    </svg>
  );
}

function Option({ label, type, checked, disabled, focused }: { label: string; type: 'radio' | 'checkbox'; checked?: boolean; disabled?: boolean; focused?: boolean }) {
  return (
    <label className={clsx('flex items-center gap-[2px] w-[182px] leading-[9px]', disabled && 'text-[#a0a0a0]')}>
      <span className="grid place-items-center shrink-0">
        <input
          type={type}
          name={type === 'radio' ? 'width-check' : undefined}
          defaultChecked={checked}
          disabled={disabled}
          className={clsx('[grid-area:1/1] appearance-none w-[9px] h-[9px] border bg-white', type === 'radio' && 'rounded-full', disabled ? 'border-[#c4c4c4]' : 'border-[#333]')}
        />
        {checked && type === 'checkbox' && (
          <svg viewBox="0 0 8 8" className="[grid-area:1/1] w-[7px] h-[7px] pointer-events-none" fill="none" stroke={disabled ? '#b5b5b5' : '#222'}><path d="M1 4l2 2 4-4" /></svg>
        )}
        {checked && type === 'radio' && <span className="[grid-area:1/1] w-[5px] h-[5px] rounded-full bg-[#bdbdbd]" />}
      </span>
      <span className={clsx(focused && 'outline outline-dotted outline-1 outline-[#666] whitespace-nowrap')}>{label}</span>
    </label>
  );
}

function Impedance({ label }: { label: string }) {
  return (
    <label className="flex gap-[5px] whitespace-nowrap">
      {label}
      <span className="text-[#2467a8]">50,00ohms</span>
    </label>
  );
}

function RulesDialog() {
  return (
    <div role="dialog" aria-label="PCB Rules and Constraints Editor" className="absolute left-[652px] -right-[40px] top-[122px] h-[516px] flex flex-col bg-[#f0f0f0] border border-[#2f80c3] shadow-[0_0_6px_rgba(0,0,0,0.45)] text-[#333]">
      <div className="flex items-center gap-[3px] shrink-0 h-[20px] pl-[5px] bg-white text-[#222]">
        <svg viewBox="0 0 12 12" className="w-[11px] h-[11px]" fill="none"><path d="M1 1l10 10V2z" fill="#d9bd59" /><path d="M0 1l10 10M0 4l7 7" stroke="#8a6d1f" /></svg>
        <h2 className="text-[8px] font-['Open_Sans',sans-serif]">PCB Rules and Constraints Editor [mm]</h2>
      </div>
      <div className="flex-1 min-h-0 flex gap-[8px] pl-[6px] pt-[6px] pb-[7px]">
        <RuleTree />
        <div className="flex-1 min-w-0 flex flex-col bg-white border border-[#a5a5a5] pl-[6px] pr-[6px]">
          <div className="flex items-center pt-[14px] pl-[7px] text-[#a0a9b5]">
            <label htmlFor="rule-name" className="w-[23px]">Name</label>
            <input id="rule-name" defaultValue="Width" className="w-[110px] h-[15px] border border-[#666] text-[#222] px-[2px]" />
            <label htmlFor="rule-comment" className="ml-[4px] w-[38px]">Comment</label>
            <input id="rule-comment" className="w-[233px] h-[15px] border border-[#666]" />
          </div>
          <h3 className="mt-[8px] h-[14px] leading-[14px] pl-[4px] bg-[#f0f0f0] font-semibold">Where The Object Matches</h3>
          <div className="relative mt-[4px] ml-[9px] w-[87px]">
            <select aria-label="Scope" className="appearance-none block w-full h-[15px] border border-[#b5b5b5] bg-[#e3e3e3] px-[3px]">
              <option>All</option>
            </select>
            <ChevronDown size={8} className="absolute right-[2px] top-[4px] pointer-events-none" />
          </div>
          <h3 className="mt-[30px] h-[14px] leading-[14px] pl-[4px] bg-[#f0f0f0] font-semibold">Constraints</h3>
          <div className="mt-[8px] pl-[32px] leading-[10px]"><Impedance label="Preferred Impedance" /></div>
          <div className="mt-[10px] pl-[1px] flex gap-[11px] leading-[10px]">
            <Impedance label="Min Impedance" />
            <Impedance label="Max Impedance" />
          </div>
          <div className="flex pl-[20px] mt-[3px]">
            <TraceDrawing />
            <div className="flex flex-col gap-[4px] pt-[6px] ml-[15px]">
              <Option type="radio" label="Check Tracks/Arcs Min/Max Width Individually" checked disabled />
              <Option type="radio" label="Check Min/Max Width for Physically Connected Copper (tracks, arcs, fills, pads & vias)" disabled />
              <Option type="checkbox" label="Characteristic Impedance Driven Width" checked focused />
              <Option type="checkbox" label="Layers in layerstack only" checked disabled />
            </div>
          </div>
          <div className="flex-1 mt-[19px] mb-[5px] border border-[#a5a5a5] overflow-hidden">
            <table className="w-full table-fixed border-collapse leading-[10px] whitespace-nowrap">
              <colgroup>
                <col className="w-[75px]" /><col className="w-[75px]" /><col className="w-[75px]" /><col className="w-[121px]" /><col className="w-[28px]" /><col className="w-[20px]" /><col />
              </colgroup>
              <thead className="bg-[#f0f0f0] text-left">
                <tr className="h-[12px] border-b border-[#b0b0b0]">
                  <th colSpan={3} className="font-normal pl-[2px] border-r border-[#b0b0b0]">Attributes on Layer</th>
                  <th colSpan={2} className="font-normal pl-[2px] border-r border-[#b0b0b0]">Layer Stack Reference</th>
                  <th colSpan={2} className="font-normal pl-[2px]">Absolute Layer</th>
                </tr>
                <tr className="h-[12px] border-b border-[#b0b0b0]">
                  <th className="font-normal text-center border-r border-[#b0b0b0]">Min Width</th>
                  <th className="font-normal text-center border-r border-[#b0b0b0]">Preferred Size</th>
                  <th className="font-normal text-center border-r border-[#b0b0b0]">Max Width</th>
                  <th className="font-normal pl-[2px] border-r border-[#b0b0b0]">Name</th>
                  <th className="font-normal pl-[2px] border-r border-[#b0b0b0]">Index</th>
                  <th className="border-r border-[#b0b0b0]" />
                  <th className="font-normal pl-[2px]">Name</th>
                </tr>
              </thead>
              <tbody>
                <tr className="h-[11px]">
                  <td className="text-right pr-[1px] bg-[#f0f0f0]">0.721mm</td><td className="text-right pr-[1px]">0.721mm</td><td className="text-right pr-[1px]">0.721mm</td>
                  <td className="pl-[2px]">Top Layer</td><td className="pl-[2px]">32</td><td className="bg-[#1a8cb3]" /><td className="pl-[2px]">TopLayer</td>
                </tr>
                <tr className="h-[11px]">
                  <td className="text-right pr-[1px]">0.165mm</td><td className="text-right pr-[1px]">0.165mm</td><td className="text-right pr-[1px]">0.165mm</td>
                  <td className="pl-[2px]">Bottom Layer</td><td className="pl-[2px]">33</td><td className="bg-[#28bdbd]" /><td className="pl-[2px]">BottomLayer</td>
                </tr>
              </tbody>
            </table>
          </div>
        </div>
      </div>
      <div className="shrink-0 h-[27px] flex items-center gap-[7px] pl-[7px] pr-[32px] border-t border-[#8f9499]">
        <button disabled className="w-[63px] h-[15px] bg-[#cccccc] border border-[#bfbfbf] text-[#9a9a9a]"><u>R</u>ule Wizard...</button>
        <button className="w-[63px] h-[15px] bg-[#e1e1e1] border border-[#adadad]"><u>P</u>riorities...</button>
        <button className="ml-auto w-[48px] h-[15px] bg-[#e1e1e1] border border-[#0b6bc4]">OK</button>
      </div>
    </div>
  );
}

/* ---------- Page ---------- */

export default function App() {
  return (
    <div className="relative flex flex-col h-screen overflow-hidden bg-[#a8a8a8] font-['Noto_Sans',sans-serif] text-[7px] leading-[10px]">
      <TitleBar />
      <Ribbon />
      <div className="flex-1 min-h-0 flex pt-[2px]">
        <LeftPanels />
        <DocumentArea />
        <LibrariesPanel />
      </div>
      <div className="shrink-0 flex items-center h-[17px] bg-[#f0f0f0] border-t border-[#a0a0a0] text-[#333] whitespace-nowrap">
        <span className="w-[73px] pl-[3px]">X:7.9mm Y:10.4mm</span>
        <span className="w-[54px]">Grid: 0.1mm</span>
        <span className="w-[104px]">(Hotspot Snap)</span>
        <span className="w-[232px] h-[11px] border-x border-[#aaa]" />
      </div>
      <footer className="shrink-0 flex h-[26px] bg-black text-white">
        <button aria-label="Start" className="w-[32px] grid place-items-center">
          <svg viewBox="0 0 12 12" className="w-[12px] h-[12px]" fill="#fff"><path d="M0 2l5-1v4.500H0zM6 .800L12 0v5.500H6zM0 6.500h5V11l-5-1zM6 6.500h6V12l-6-.800z" /></svg>
        </button>
        <button aria-label="CircuitStudio" className="w-[27px] ml-[4px] grid place-items-center border-b-2 border-[#6aa5dc]"><LogoMark className="w-[15px] h-[15px]" /></button>
        <button aria-label="Recorder" className="w-[27px] ml-[6px] grid place-items-center border-b-2 border-[#6aa5dc]">
          <svg viewBox="0 0 16 16" className="w-[16px] h-[16px]"><path d="M0 1h15v12H0z" fill="#7d2a6d" /><path d="M3 6h7v5H3zM10 8l3-2v5l-3-2z" fill="#fff" /><circle cx="5" cy="4.500" r="1.500" fill="#fff" /><circle cx="9" cy="4.500" r="1.500" fill="#fff" /><circle cx="12.500" cy="12.500" r="3" fill="#e8484b" /></svg>
        </button>
        <div className="ml-auto w-[46px] text-center leading-[12px]">
          00:00<br />19.03.2018
        </div>
      </footer>
      <RulesDialog />
      <svg viewBox="0 0 38 38" className="absolute left-[950px] top-[120px] w-[37px] h-[37px] pointer-events-none" aria-hidden="true">
        <circle cx="19" cy="19" r="18.500" fill="#f2ec62" fillOpacity=".8" />
        <path d="M16 13v11l2.500-2 2 4.500 1.700-.800-2-4.200h3.500z" fill="#fff" stroke="#222" strokeWidth=".8" />
      </svg>
    </div>
  );
}
